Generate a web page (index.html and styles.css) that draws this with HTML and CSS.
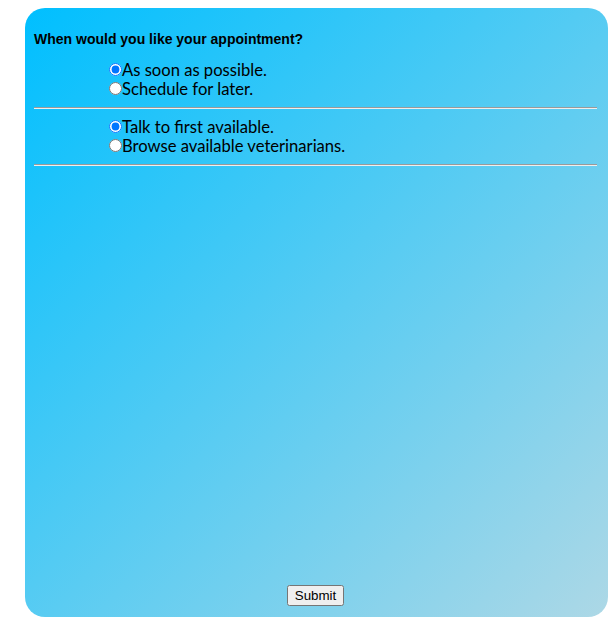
FILE: index.html
```html
<!DOCTYPE html>
<html>
<head>
<meta charset="utf-8">
<link rel="stylesheet" href="styles.css">
</head>
<body>
<form class="card">
  <div class="question">When would you like your appointment?</div>
  <div class="group">
    <label class="option"><input type="radio" name="when" checked><span>As soon as possible.</span></label>
    <label class="option"><input type="radio" name="when"><span>Schedule for later.</span></label>
  </div>
  <hr class="rule">
  <div class="group">
    <label class="option"><input type="radio" name="vet" checked><span>Talk to first available.</span></label>
    <label class="option"><input type="radio" name="vet"><span>Browse available veterinarians.</span></label>
  </div>
  <hr class="rule">
  <div class="actions">
    <button type="button" class="submit">Submit</button>
  </div>
</form>
</body>
</html>
```
FILE: styles.css
```css
html, body {
  margin: 0;
  padding: 0;
  background: #ffffff;
}
.card {
  box-sizing: border-box;
  width: 583px;
  height: 609px;
  margin: 8px 0 0 25px;
  padding: 23px 11px 11px 9px;
  border-radius: 20px;
  background: linear-gradient(to bottom right, #00bfff, #add8e6);
  display: flex;
  flex-direction: column;
}
.question {
  font-family: "Liberation Sans", Arial, sans-serif;
  font-weight: bold;
  font-size: 14px;
  line-height: 16px;
  color: #000;
  margin: 0 0 13px 0;
}
.group {
  padding-left: 75px;
  display: flex;
  flex-direction: column;
}
.option {
  display: flex;
  align-items: center;
  height: 19px;
  font-family: Lato, "Liberation Sans", sans-serif;
  font-size: 16.6px;
  line-height: 19px;
  color: #000;
}
.option span {
  padding-top: 2px;
}
.option input {
  margin: 0;
  width: 13px;
  height: 13px;
}
.rule {
  margin: 9px 0 8px 0;
  border: none;
  border-top: 1px solid #9a9a9a;
  border-bottom: 1px solid #eeeeee;
}
.actions {
  margin-top: auto;
  display: flex;
  justify-content: center;
}
.submit {
  font-family: "Liberation Sans", Arial, sans-serif;
  font-size: 13.333px;
}
```
